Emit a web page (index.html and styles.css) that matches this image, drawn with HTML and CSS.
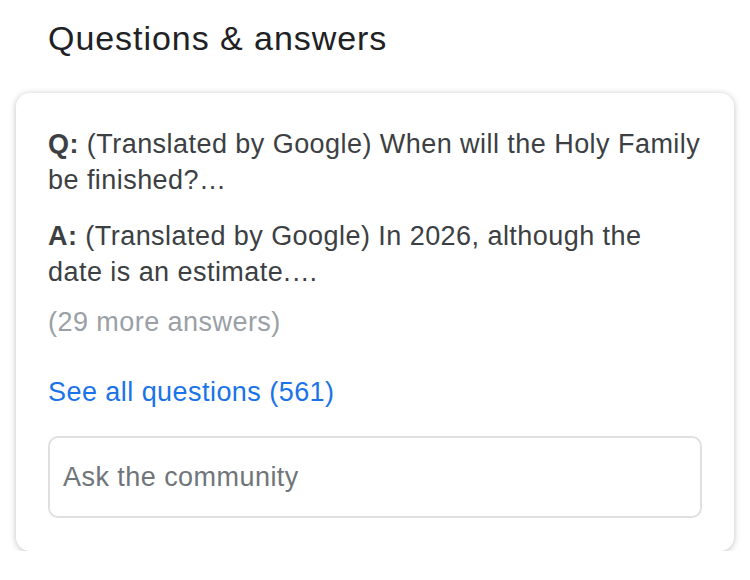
FILE: index.html
```html
<!DOCTYPE html>
<html>
<head>
<meta charset="utf-8">
<link rel="stylesheet" href="styles.css">
</head>
<body>
<div class="page">
  <h2 class="title">Questions &amp; answers</h2>
  <div class="card">
    <p class="qa"><b>Q:</b> (Translated by Google) When will the Holy Family be finished?…</p>
    <p class="qa answer"><b>A:</b> (Translated by Google) In 2026, although the date is an estimate.…</p>
    <p class="more">(29 more answers)</p>
    <a class="link" href="#">See all questions (561)</a>
    <div class="ask">Ask the community</div>
  </div>
</div>
</body>
</html>
```
FILE: styles.css
```css
html, body { margin: 0; padding: 0; background: #fff; }
body { font-family: "Liberation Sans", Arial, sans-serif; }
.page { padding: 16px 16px 0 16px; width: 718px; }
.title {
  margin: 0 0 0 32px;
  font-weight: normal;
  font-size: 34px;
  letter-spacing: 0.95px;
  line-height: 44px;
  color: #202124;
}
.card {
  margin-top: 33px;
  background: #fff;
  border-radius: 14px;
  box-shadow: 0 1px 6px rgba(32,33,36,0.28);
  padding: 33px 32px 33px 32px;
  display: flex;
  flex-direction: column;
}
.qa {
  margin: 0;
  font-size: 27px;
  letter-spacing: 0.45px;
  line-height: 36px;
  color: #3c4043;
}
.qa b { color: #3c4043; }
.answer { margin-top: 20px; }
.more {
  margin: 14px 0 0 0;
  font-size: 27px;
  letter-spacing: 0.45px;
  line-height: 36px;
  color: #9aa0a6;
}
.link {
  margin-top: 34px;
  font-size: 27px;
  letter-spacing: 0.45px;
  line-height: 36px;
  color: #1a73e8;
  text-decoration: none;
}
.ask {
  margin-top: 26px;
  height: 78px;
  border: 2px solid #e0e0e0;
  border-radius: 10px;
  padding: 0 13px;
  display: flex;
  align-items: center;
  font-size: 27px;
  letter-spacing: 0.45px;
  color: #70757a;
}
```
